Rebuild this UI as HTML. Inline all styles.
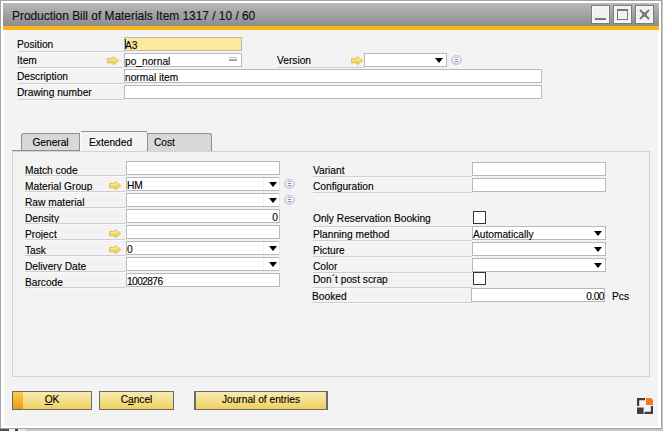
<!DOCTYPE html><html><head><meta charset="utf-8"><style>
*{margin:0;padding:0;box-sizing:border-box}
html,body{width:663px;height:431px;overflow:hidden;background:#c9c9c9;font-family:"Liberation Sans", sans-serif}
#win{position:absolute;left:0;top:0;width:662px;height:429px;background:#fff;border:1px solid #a3a3a3}
#title{position:absolute;left:3px;top:3px;width:656px;height:23px;background:linear-gradient(#b9b9b9,#8e8e8e);border-bottom:1px solid #8b8f98}
#ttext{position:absolute;left:9px;top:3px;height:20px;line-height:20px;font-size:11.9px;color:#101018;white-space:nowrap;-webkit-text-stroke:0.15px #101018}
#orange{position:absolute;left:3px;top:26px;width:656px;height:4px;background:#fbb416}
#content{position:absolute;left:4px;top:30px;width:654px;height:396px;background:#f3f3f3;border-top:1px solid #f5f7fb}
.lb{position:absolute;height:14px;line-height:14px;font-size:10.2px;color:#000;white-space:nowrap;-webkit-text-stroke:0.12px #000}
.sp{position:absolute;height:1px;background:#cfcfcf;box-shadow:0 1px 0 #f9f9f9}
.fd,.dd{position:absolute;border:1px solid #b9b9b9;background:#fff;font-size:10.2px;line-height:16px;color:#000;white-space:nowrap;-webkit-text-stroke:0.12px #000;padding:0 1px 0 0}
.dd .btn{position:absolute;right:0;top:0;bottom:0}
.dl .btn{border-left:1px solid #f1f1f1}
.dd .tri{position:absolute;right:3px;top:4px;width:0;height:0;border-left:4.5px solid transparent;border-right:4.5px solid transparent;border-top:5px solid #000}
.ar,.ci{position:absolute}
.cb{position:absolute;width:13px;height:13px;border:1px solid #333;background:#fff}
.tab{position:absolute;height:18px;line-height:17px;font-size:10.2px;color:#000;-webkit-text-stroke:0.12px #000;border:1px solid #8e8e8e;border-bottom:none;text-align:center}
.bt{position:absolute;height:19px;line-height:16px;font-size:10.2px;color:#000;-webkit-text-stroke:0.12px #000;text-align:center;border:1px solid #6b6b6b;background:linear-gradient(#f8e9b2,#f4dc82 60%,#efcf5b)}
.tb{position:absolute;top:5px;width:19px;height:19px;border:1px solid #7b7b7b;background:#f1f1f1;box-shadow:inset 0 0 0 1px #fafafa}
</style></head><body><div id="win"></div><div style="position:absolute;left:0;top:429px;width:9px;height:2px;background:#4d4d4d"></div><div style="position:absolute;left:9px;top:429px;width:6px;height:2px;background:#f2f2f2"></div><div style="position:absolute;left:15px;top:429px;width:3px;height:2px;background:#3c3c3c"></div><div style="position:absolute;left:18px;top:429px;width:8px;height:2px;background:#e8e8e8"></div><div id="title"><div id="ttext">Production Bill of Materials Item 1317 / 10 / 60</div></div><div id="orange"></div><div id="content"></div><div class="tb" style="left:591px"><div style="position:absolute;left:3px;top:12px;width:11px;height:2px;background:#777"></div></div><div class="tb" style="left:613px"><div style="position:absolute;left:3px;top:3px;width:11px;height:11px;border:1px solid #777;border-top-width:2px"></div></div><div class="tb" style="left:635px"><svg style="position:absolute;left:3px;top:3px" width="11" height="11" viewBox="0 0 11 11"><path d="M1 1L10 10M10 1L1 10" stroke="#787878" stroke-width="2"/><rect x="3.3" y="3.3" width="4.4" height="4.4" fill="#787878"/></svg></div><div class="lb" style="left:17px;top:38px;">Position</div><div class="sp" style="left:18px;top:51px;width:106px"></div><div class="lb" style="left:17px;top:54px;">Item</div><div class="sp" style="left:18px;top:67px;width:106px"></div><div class="lb" style="left:17px;top:70px;">Description</div><div class="sp" style="left:18px;top:83px;width:106px"></div><div class="lb" style="left:17px;top:86px;">Drawing number</div><div class="sp" style="left:18px;top:99px;width:106px"></div><div class="fd" style="left:124px;top:37px;width:118px;height:14px;background:#fde89b;border-color:#b9b9b6"><span>A3</span></div><div style="position:absolute;left:125px;top:39px;width:1px;height:10px;background:#1a2a6a"></div><svg class="ar" style="left:107px;top:55px" width="13" height="11" viewBox="0 0 13 11"><defs><linearGradient id="ag" x1="0" y1="0" x2="0" y2="1"><stop offset="0" stop-color="#fff3a8"/><stop offset="1" stop-color="#e9c53a"/></linearGradient></defs><path d="M0.4 3.4 H6.2 V1.5 L11.8 5.6 L6.2 9.7 V7.8 H0.4 Z" fill="url(#ag)" stroke="#d9b847" stroke-width="0.8"/></svg><div class="fd" style="left:124px;top:53px;width:118px;height:14px;background:#fff;"><span>po_nornal</span></div><div style="position:absolute;left:229px;top:57px;width:8px;height:1px;background:#c9c9c9"></div><div style="position:absolute;left:229px;top:59px;width:8px;height:2px;background:#a6a6a6"></div><div class="fd" style="left:124px;top:69px;width:418px;height:14px;background:#fff;"><span>normal item</span></div><div class="fd" style="left:124px;top:85px;width:418px;height:14px;background:#fff;"><span></span></div><div class="lb" style="left:277px;top:54px;">Version</div><div class="sp" style="left:278px;top:67px;width:86px"></div><svg class="ar" style="left:351px;top:55px" width="13" height="11" viewBox="0 0 13 11"><defs><linearGradient id="ag" x1="0" y1="0" x2="0" y2="1"><stop offset="0" stop-color="#fff3a8"/><stop offset="1" stop-color="#e9c53a"/></linearGradient></defs><path d="M0.4 3.4 H6.2 V1.5 L11.8 5.6 L6.2 9.7 V7.8 H0.4 Z" fill="url(#ag)" stroke="#d9b847" stroke-width="0.8"/></svg><div class="dd" style="left:364px;top:53px;width:83px;height:14px;"><span></span><i class="btn" style="width:16px"></i><b class="tri" style="right:3px"></b></div><svg class="ci" style="left:451px;top:55px" width="12" height="11" viewBox="0 0 12 11"><defs><radialGradient id="cg" cx="0.5" cy="0.45" r="0.6"><stop offset="0.3" stop-color="#f8f9fc"/><stop offset="1" stop-color="#c3cbe0"/></radialGradient></defs><ellipse cx="5.5" cy="4.9" rx="5.1" ry="4.6" fill="url(#cg)" stroke="#b6bfd6" stroke-width="0.8"/><path d="M3.9 2.4H7.1" stroke="#a3aabb" stroke-width="0.9"/><path d="M3.9 4.5H7.1M3.9 6.5H7.1" stroke="#7f879b" stroke-width="0.9"/></svg><div class="tab" style="left:21px;top:133px;width:59px;height:18px;background:#d8d8d8;border-top-left-radius:3px">General</div><div style="position:absolute;left:12px;top:151px;width:638px;height:226px;border:1px solid #d3d3d3"></div><div style="position:absolute;left:12px;top:150px;width:200px;height:1px;background:#8e8e8e"></div><div class="tab" style="left:80px;top:131px;width:68px;height:20px;background:#f3f3f3;border-top-left-radius:2px;border-top-right-radius:2px;border-left-color:#fbfbfb;border-right-color:#fbfbfb;line-height:21px;text-align:left;padding-left:8px">Extended</div><div class="tab" style="left:147px;top:133px;width:65px;height:18px;background:#d8d8d8;border-top-right-radius:3px;text-align:left;padding-left:6px">Cost</div><div class="lb" style="left:25px;top:164px;">Match code</div><div class="sp" style="left:25px;top:175px;width:101px"></div><div class="lb" style="left:25px;top:180px;">Material Group</div><div class="sp" style="left:25px;top:191px;width:101px"></div><div class="lb" style="left:25px;top:196px;">Raw material</div><div class="sp" style="left:25px;top:207px;width:101px"></div><div class="lb" style="left:25px;top:212px;">Density</div><div class="sp" style="left:25px;top:223px;width:101px"></div><div class="lb" style="left:25px;top:228px;">Project</div><div class="sp" style="left:25px;top:239px;width:101px"></div><div class="lb" style="left:25px;top:244px;">Task</div><div class="sp" style="left:25px;top:255px;width:101px"></div><div class="lb" style="left:25px;top:260px;">Delivery Date</div><div class="sp" style="left:25px;top:271px;width:101px"></div><div class="lb" style="left:25px;top:276px;">Barcode</div><div class="sp" style="left:25px;top:287px;width:101px"></div><div class="fd" style="left:126px;top:161px;width:154px;height:14px;background:#fff;"><span></span></div><div class="dd dl" style="left:126px;top:177px;width:154px;height:14px;border-right-color:#e8e8e8"><span>HM</span><i class="btn" style="width:16px"></i><b class="tri" style="right:2px"></b></div><svg class="ar" style="left:109px;top:180px" width="13" height="11" viewBox="0 0 13 11"><defs><linearGradient id="ag" x1="0" y1="0" x2="0" y2="1"><stop offset="0" stop-color="#fff3a8"/><stop offset="1" stop-color="#e9c53a"/></linearGradient></defs><path d="M0.4 3.4 H6.2 V1.5 L11.8 5.6 L6.2 9.7 V7.8 H0.4 Z" fill="url(#ag)" stroke="#d9b847" stroke-width="0.8"/></svg><svg class="ci" style="left:284px;top:179px" width="12" height="11" viewBox="0 0 12 11"><defs><radialGradient id="cg" cx="0.5" cy="0.45" r="0.6"><stop offset="0.3" stop-color="#f8f9fc"/><stop offset="1" stop-color="#c3cbe0"/></radialGradient></defs><ellipse cx="5.5" cy="4.9" rx="5.1" ry="4.6" fill="url(#cg)" stroke="#b6bfd6" stroke-width="0.8"/><path d="M3.9 2.4H7.1" stroke="#a3aabb" stroke-width="0.9"/><path d="M3.9 4.5H7.1M3.9 6.5H7.1" stroke="#7f879b" stroke-width="0.9"/></svg><div class="dd dl" style="left:126px;top:193px;width:154px;height:14px;border-right-color:#e8e8e8"><span></span><i class="btn" style="width:16px"></i><b class="tri" style="right:2px"></b></div><svg class="ci" style="left:284px;top:195px" width="12" height="11" viewBox="0 0 12 11"><defs><radialGradient id="cg" cx="0.5" cy="0.45" r="0.6"><stop offset="0.3" stop-color="#f8f9fc"/><stop offset="1" stop-color="#c3cbe0"/></radialGradient></defs><ellipse cx="5.5" cy="4.9" rx="5.1" ry="4.6" fill="url(#cg)" stroke="#b6bfd6" stroke-width="0.8"/><path d="M3.9 2.4H7.1" stroke="#a3aabb" stroke-width="0.9"/><path d="M3.9 4.5H7.1M3.9 6.5H7.1" stroke="#7f879b" stroke-width="0.9"/></svg><div class="fd" style="left:126px;top:209px;width:154px;height:14px;background:#fff;text-align:right;"><span>0</span></div><div class="fd" style="left:126px;top:225px;width:154px;height:14px;background:#fff;"><span></span></div><svg class="ar" style="left:109px;top:228px" width="13" height="11" viewBox="0 0 13 11"><defs><linearGradient id="ag" x1="0" y1="0" x2="0" y2="1"><stop offset="0" stop-color="#fff3a8"/><stop offset="1" stop-color="#e9c53a"/></linearGradient></defs><path d="M0.4 3.4 H6.2 V1.5 L11.8 5.6 L6.2 9.7 V7.8 H0.4 Z" fill="url(#ag)" stroke="#d9b847" stroke-width="0.8"/></svg><div class="dd dl" style="left:126px;top:241px;width:154px;height:14px;border-right-color:#e8e8e8"><span>0</span><i class="btn" style="width:16px"></i><b class="tri" style="right:2px"></b></div><svg class="ar" style="left:109px;top:244px" width="13" height="11" viewBox="0 0 13 11"><defs><linearGradient id="ag" x1="0" y1="0" x2="0" y2="1"><stop offset="0" stop-color="#fff3a8"/><stop offset="1" stop-color="#e9c53a"/></linearGradient></defs><path d="M0.4 3.4 H6.2 V1.5 L11.8 5.6 L6.2 9.7 V7.8 H0.4 Z" fill="url(#ag)" stroke="#d9b847" stroke-width="0.8"/></svg><div class="dd dl" style="left:126px;top:257px;width:154px;height:14px;border-right-color:#e8e8e8"><span></span><i class="btn" style="width:16px"></i><b class="tri" style="right:2px"></b></div><div class="fd" style="left:126px;top:273px;width:154px;height:14px;background:#fff;letter-spacing:-0.6px"><span>1002876</span></div><div class="lb" style="left:313px;top:164px;">Variant</div><div class="sp" style="left:313px;top:176px;width:159px"></div><div class="fd" style="left:472px;top:162px;width:134px;height:14px;background:#fff;"><span></span></div><div class="lb" style="left:313px;top:180px;">Configuration</div><div class="sp" style="left:313px;top:192px;width:159px"></div><div class="fd" style="left:472px;top:178px;width:134px;height:14px;background:#fff;"><span></span></div><div class="lb" style="left:313px;top:212px;">Only Reservation Booking</div><div class="sp" style="left:313px;top:226px;width:159px"></div><div class="cb" style="left:473px;top:211px"></div><div class="lb" style="left:313px;top:228px;">Planning method</div><div class="sp" style="left:313px;top:240px;width:159px"></div><div class="dd" style="left:472px;top:226px;width:134px;height:14px;"><span>Automatically</span><i class="btn" style="width:16px"></i><b class="tri" style="right:3px"></b></div><div class="lb" style="left:313px;top:244px;">Picture</div><div class="sp" style="left:313px;top:256px;width:159px"></div><div class="dd" style="left:472px;top:242px;width:134px;height:14px;"><span></span><i class="btn" style="width:16px"></i><b class="tri" style="right:3px"></b></div><div class="lb" style="left:313px;top:260px;">Color</div><div class="sp" style="left:313px;top:272px;width:159px"></div><div class="dd" style="left:472px;top:258px;width:134px;height:14px;"><span></span><i class="btn" style="width:16px"></i><b class="tri" style="right:3px"></b></div><div class="lb" style="left:313px;top:273px;">Don&#180;t post scrap</div><div class="sp" style="left:313px;top:287px;width:159px"></div><div class="cb" style="left:473px;top:272px"></div><div class="lb" style="left:312px;top:290px;">Booked</div><div class="sp" style="left:312px;top:302px;width:160px"></div><div class="fd" style="left:471px;top:288px;width:134px;height:14px;background:#fff;text-align:right;letter-spacing:-0.5px;padding-right:0"><span>0.00</span></div><div class="lb" style="left:612px;top:290px;">Pcs</div><div class="bt" style="left:12px;top:391px;width:80px"><u>O</u>K<div style="position:absolute;left:0;top:0;width:10px;height:17px;background:linear-gradient(#f9cf45,#f0951a)"></div></div><div class="bt" style="left:99px;top:391px;width:75px">C<u>a</u>ncel</div><div class="bt" style="left:194px;top:391px;width:134px;border-width:1px 2px">Journal of entries</div><svg style="position:absolute;left:637px;top:398px" width="16" height="16" viewBox="0 0 16 16"><path d="M0 0H8V2.2H2.2V8H0Z" fill="#3f3f3f"/><path d="M9 0H13A3 3 0 0 1 16 3V7H9Z" fill="#f47a20"/><rect x="0" y="9.5" width="6.6" height="6.5" fill="#3f3f3f"/><path d="M16 8V16H7.5V13.8H13.8V8Z" fill="#3f3f3f"/></svg></body></html>
